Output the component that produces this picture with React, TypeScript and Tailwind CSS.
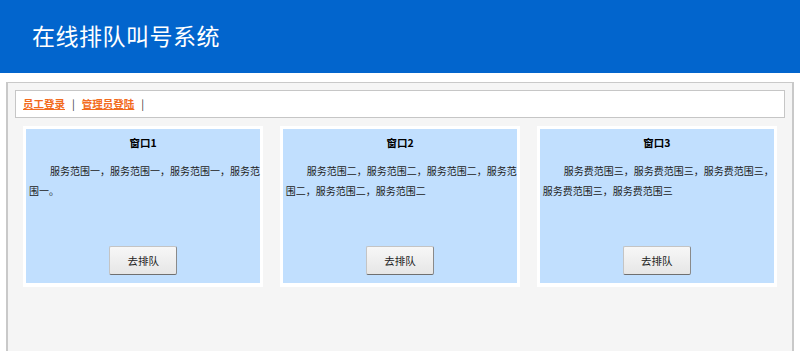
import React from 'react';

const windows = [
  {
    name: '窗口1',
    lines: ['服务范围一，服务范围一，服务范围一，服务范', '围一。'],
  },
  {
    name: '窗口2',
    lines: ['服务范围二，服务范围二，服务范围二，服务范', '围二，服务范围二，服务范围二'],
  },
  {
    name: '窗口3',
    lines: ['服务费范围三，服务费范围三，服务费范围三，', '服务费范围三，服务费范围三'],
  },
];

const cjk = { fontFamily: '"Noto Sans CJK SC", "Noto Sans", sans-serif' };

function WindowCard({ name, lines }: { name: string; lines: string[] }) {
  return (
    <div className="bg-white p-[3px] pb-[4px]">
      <div className="flex h-[154px] flex-col bg-[#c1dffe] px-[3px] pt-[4px] pb-[8px] text-[#222]">
        <div className="text-center text-[10.5px] leading-[20px] font-bold text-black">{name}</div>
        {/* description, broken where the reference breaks it */}
        <p className="mt-[8px] whitespace-nowrap text-[10px] leading-[19.5px]">
          {lines.map((line, i) => (
            <span key={i} className={i === 0 ? 'block pl-[21px]' : 'block'}>
              {line}
            </span>
          ))}
        </p>
        <div className="mt-auto flex justify-center">
          <button className="h-[29px] w-[68px] rounded-[2px] border border-[#c4c4c4] border-r-[#8a8a8a] border-b-[#6f6f6f] bg-gradient-to-b from-[#f7f7f7] to-[#e6e6e6] text-[10.5px] text-[#222]">
            去排队
          </button>
        </div>
      </div>
    </div>
  );
}

export default function App() {
  return (
    <div className="flex h-[351px] w-[800px] flex-col overflow-hidden bg-white" style={cjk}>
      {/* Header */}
      <header className="flex h-[73px] shrink-0 items-center bg-[#0265cd] pb-[3px] pl-[32px]">
        <h1 className="text-[23px] leading-none font-normal tracking-[0.5px] text-white">在线排队叫号系统</h1>
      </header>

      <div className="h-[9px] shrink-0" />

      {/* Main panel */}
      <main className="ml-[6px] flex w-[788px] flex-1 flex-col border-x-2 border-t border-[#c9c9c9] bg-[#f5f5f5] px-[7px] pt-[7px]">
        <nav className="flex h-[28px] items-center gap-[7px] border border-[#c6c6c6] bg-white pl-[7px] text-[10.5px]">
          <a href="#" className="font-bold text-[#f26b1d] underline">员工登录</a>
          <span className="text-[#333]">|</span>
          <a href="#" className="font-bold text-[#f26b1d] underline">管理员登陆</a>
          <span className="text-[#333]">|</span>
        </nav>

        <div className="mt-[8px] grid grid-cols-3 gap-x-[16.5px] px-[8px]">
          {windows.map((w) => (
            <WindowCard key={w.name} name={w.name} lines={w.lines} />
          ))}
        </div>
      </main>
    </div>
  );
}
